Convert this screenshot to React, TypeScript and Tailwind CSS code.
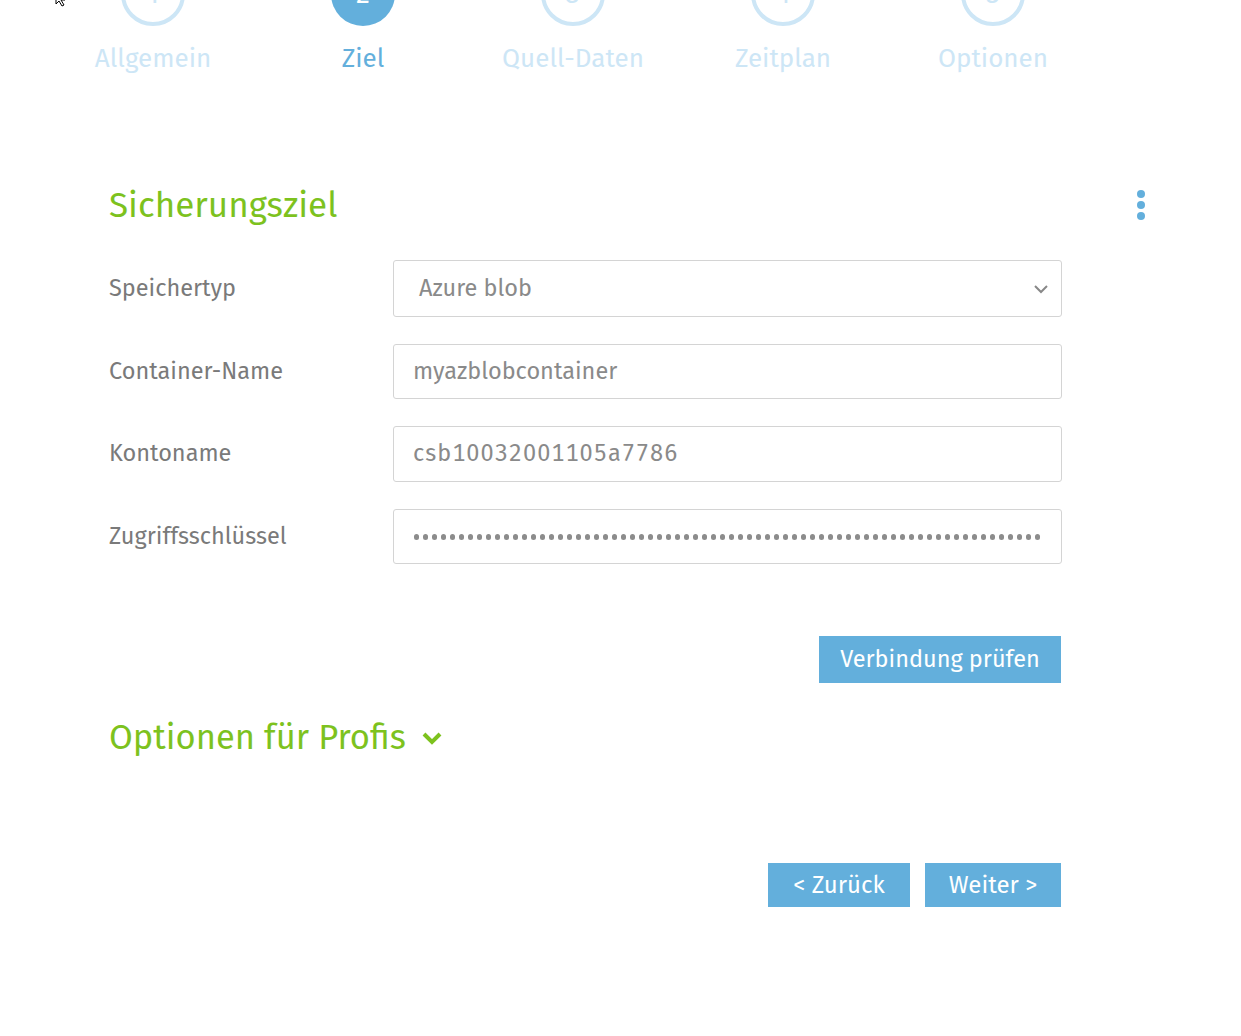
import React from "react";

const steps = [
  { n: "1", label: "Allgemein", active: false },
  { n: "2", label: "Ziel", active: true },
  { n: "3", label: "Quell-Daten", active: false },
  { n: "4", label: "Zeitplan", active: false },
  { n: "5", label: "Optionen", active: false },
];

const font = { fontFamily: '"Fira Sans", "Noto Sans", "Open Sans", sans-serif' };

function Row({ label, children }: { label: string; children: React.ReactNode }) {
  return (
    <div className="flex items-center">
      <div className="w-[284px] text-[23.5px] text-[#7a7a7a]">{label}</div>
      <div className="w-[669px]">{children}</div>
    </div>
  );
}

export default function App() {
  return (
    <div className="relative w-[1241px] h-[1036px] bg-white overflow-hidden" style={font}>
      {/* cursor */}
      <svg className="absolute left-[55px] top-[-8px]" width="16" height="16" viewBox="0 0 16 16">
        <path d="M1 1 L1 12 L4 9 L7 14 L9 13 L6 8 L10 8 Z" fill="white" stroke="black" strokeWidth="1" />
      </svg>

      {/* stepper */}
      <div className="ml-[48px] mt-[-38px] grid grid-cols-5 w-[1050px]">
        {steps.map((s) => (
          <div key={s.n} className="flex flex-col items-center">
            <div
              className={
                s.active
                  ? "w-[64px] h-[64px] rounded-full bg-[#63afdc] flex items-center justify-center text-white text-[28px]"
                  : "w-[64px] h-[64px] rounded-full border-[4px] border-[#cde6f6] flex items-center justify-center text-[#cde6f6] text-[28px]"
              }
            >
              {s.n}
            </div>
            <div
              className={
                s.active
                  ? "mt-[16px] text-[26px] leading-[34px] text-[#63afdc]"
                  : "mt-[16px] text-[26px] leading-[34px] text-[#cde6f6]"
              }
            >
              {s.label}
            </div>
          </div>
        ))}
      </div>

      {/* content */}
      <div className="ml-[109px] mt-[105px] w-[1042px]">
        <div className="flex items-center justify-between">
          <h1 className="text-[35px] leading-[48px] text-[#7dc21e]">Sicherungsziel</h1>
          <div className="flex flex-col gap-[3px] items-center mr-[6px]">
            <span className="w-[8px] h-[8px] rounded-full bg-[#63afdc]" />
            <span className="w-[8px] h-[8px] rounded-full bg-[#63afdc]" />
            <span className="w-[8px] h-[8px] rounded-full bg-[#63afdc]" />
          </div>
        </div>

        <div className="mt-[31px] flex flex-col gap-[27px]">
          <Row label="Speichertyp">
            <div className="h-[57px] border border-[#d4d4d4] rounded-[3px] flex items-center justify-between pl-[25px] pr-[12px] text-[23.5px] text-[#8a8a8a]">
              <span>Azure blob</span>
              <svg width="16" height="10" viewBox="0 0 16 10">
                <path d="M2 2 L8 8 L14 2" fill="none" stroke="#888" strokeWidth="2" />
              </svg>
            </div>
          </Row>
          <Row label="Container-Name">
            <div className="h-[55px] border border-[#d4d4d4] rounded-[3px] flex items-center pl-[19px] text-[23.5px] text-[#8a8a8a]">
              myazblobcontainer
            </div>
          </Row>
          <Row label="Kontoname">
            <div className="h-[56px] border border-[#d4d4d4] rounded-[3px] flex items-center pl-[19px] text-[23.5px] text-[#8a8a8a] tabular-nums tracking-[1px]">
              csb10032001105a7786
            </div>
          </Row>
          <Row label="Zugriffsschlüssel">
            <div className="h-[55px] border border-[#d4d4d4] rounded-[3px] flex items-center pl-[20px] text-[#8a8a8a] overflow-hidden">
              <div className="flex gap-[4px]">
                {Array.from({ length: 70 }).map((_, i) => (
                  <span key={i} className="w-[5px] h-[6px] rounded-full bg-[#8c8c8c]" />
                ))}
              </div>
            </div>
          </Row>
        </div>

        <div className="mt-[72px] w-[952px] flex justify-end">
          <button className="h-[47px] w-[242px] bg-[#63afdc] text-white text-[23.5px]">Verbindung prüfen</button>
        </div>

        <div className="mt-[31px] flex items-center gap-[15px]">
          <span className="text-[34.5px] leading-[48px] text-[#7dc21e]">Optionen für Profis</span>
          <svg width="22" height="14" viewBox="0 0 22 14">
            <path d="M3 3 L11 11 L19 3" fill="none" stroke="#7dc21e" strokeWidth="4" />
          </svg>
        </div>

        <div className="mt-[101px] w-[952px] flex justify-end gap-[15px]">
          <button className="h-[44px] w-[142px] bg-[#63afdc] text-white text-[24px]">&lt; Zurück</button>
          <button className="h-[44px] w-[136px] bg-[#63afdc] text-white text-[24px]">Weiter &gt;</button>
        </div>
      </div>
    </div>
  );
}
